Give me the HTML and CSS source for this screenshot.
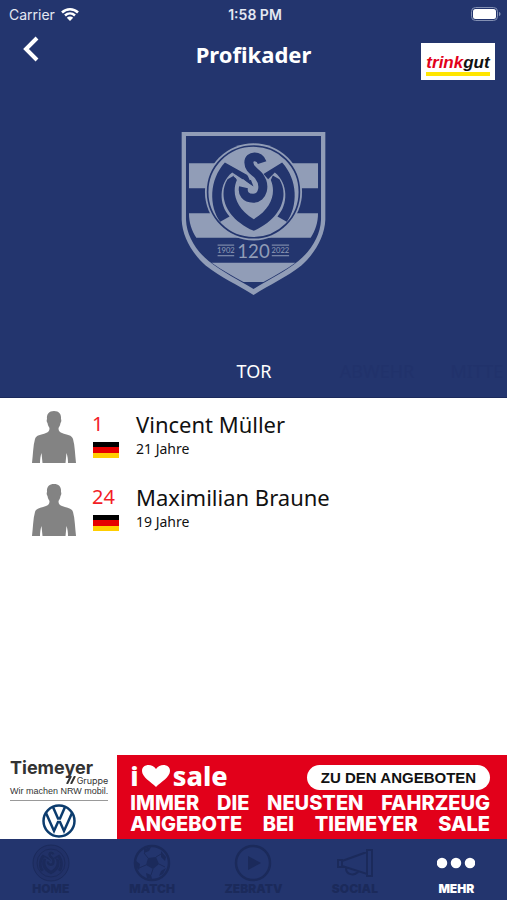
FILE: index.html
```html
<!DOCTYPE html>
<html lang="de">
<head>
    <meta charset="UTF-8">
    <meta name="viewport" content="width=device-width, initial-scale=1.0">
    <title>Profikader</title>
    <link rel="stylesheet" href="styles.css">
</head>
<body>

    <!-- shared shapes -->
    <svg class="defs" aria-hidden="true">
        <symbol id="msv" viewBox="18 12 290 290">
            <path d="M84 118 L104 107 L112 120 C97 155 105 203 163 238 C221 203 229 155 214 120 L220 107 L240 118 C269 165 248 235 163 273 C76 235 55 165 84 118Z"/>
            <path class="s-gap" d="M188 68 C180 44 148 46 148 68 C148 88 166 94 178 108 C200 136 190 175 161 175 C138 175 128 160 132 142"/>
            <path d="M76 68 L150 109 L162 140 L98 98 C57 130 57 195 90 230 L62 246 C28 200 28 120 76 68Z"/>
            <path d="M248 68 L192 102 L206 118 L226 98 C267 130 267 195 234 230 L262 246 C296 200 296 120 248 68Z"/>
            <path class="s-edge" d="M132 66 C134 88 146 98 154 120 M104 107 L160 146"/>
            <path class="s-line" d="M188 68 C180 44 148 46 148 68 C148 88 166 94 178 108 C200 136 190 175 161 175 C138 175 128 160 132 142"/>
            <path class="s-edge" d="M128 120 L158 144"/>
            <circle class="s-dot" cx="160" cy="150" r="9"/>
        </symbol>
        <symbol id="person" viewBox="0 0 44 52">
            <path d="M22 0C27 0 29.500 3 29 8C29.500 9 29.500 11 28.500 12C28 15 27 16 26.500 17C26.500 20 27.500 21 30 22C35 24 40 24 41 28C43 35 43 44 44 52H36C36 48 35.500 45 34.500 42L33.500 52H10.500L9.500 42C8.500 45 8 48 8 52H0C1 44 1 35 3 28C4 24 9 24 14 22C16.500 21 17.500 20 17.500 17C17 16 16 15 15.500 12C14.500 11 14.500 9 15 8C14.500 3 17 0 22 0Z"/>
        </symbol>
    </svg>

    <header class="header">
        <div class="status-bar">
            <div class="carrier">
                <span>Carrier</span>
                <svg class="wifi" viewBox="0 0 18 14">
                    <path d="M1 5.500C5.500 1 12.500 1 17 5.500M4 8.500C7 5.700 11 5.700 14 8.500"/>
                    <path class="wifi-dot" d="M9 14L5.800 10.700C7.500 9 10.500 9 12.200 10.700Z"/>
                </svg>
            </div>
            <span class="time">1:58 PM</span>
            <svg class="battery" viewBox="0 0 30 14">
                <rect class="battery-case" x="0.500" y="0.500" width="26" height="13" rx="4"/>
                <rect class="battery-fill" x="2" y="2" width="23" height="10" rx="2.500"/>
                <path class="battery-tip" d="M28 5C30 5.500 30 8.500 28 9Z"/>
            </svg>
        </div>

        <div class="title-bar">
            <button class="back-btn" aria-label="Zurück">
                <svg viewBox="0 0 16 26"><path d="M14 2L3 13L14 24"/></svg>
            </button>
            <h1>Profikader</h1>
            <a class="sponsor" href="#">
                <span class="sponsor-name"><span class="sponsor-red">trink</span>gut</span>
            </a>
        </div>

        <svg class="crest" viewBox="34 34 436 494">
            <path class="light" d="M36 36H468V300C466 350 438 400 396 437C350 473 300 495 252 526C204 495 154 473 108 437C66 400 38 350 36 300Z"/>
            <path class="dark" d="M49 48H455V300C453 346 428 390 387 424C345 458 298 480 252 508C206 480 159 458 117 424C76 390 51 346 49 300Z"/>
            <path class="light" d="M58 130H446V205H58ZM58 280H446C446 308 438 332 424 354H80C66 332 58 308 58 280ZM126 429H378C348 451 315 468 282 487H222C189 468 156 451 126 429Z"/>
            <circle class="light" cx="252" cy="216" r="146"/>
            <circle class="ring" cx="252" cy="216" r="138"/>
            <use href="#msv" x="108" y="72" width="290" height="290"/>
            <path class="date-lines" d="M144 376H194M144 408H194M307 376H359M307 408H359"/>
            <text class="date" x="169" y="400">1902</text>
            <text class="years" x="252" y="414">120</text>
            <text class="date" x="333" y="400">2022</text>
        </svg>

        <nav class="tabs">
            <button class="tab active">TOR</button>
            <button class="tab">ABWEHR</button>
            <button class="tab next">MITTE</button>
        </nav>
    </header>

    <main class="players">
        <div class="player">
            <svg class="photo"><use href="#person"/></svg>
            <div class="number">
                <span>1</span>
                <div class="flag"></div>
            </div>
            <div class="info">
                <h2>Vincent Müller</h2>
                <p>21 Jahre</p>
            </div>
        </div>
        <div class="player">
            <svg class="photo"><use href="#person"/></svg>
            <div class="number">
                <span>24</span>
                <div class="flag"></div>
            </div>
            <div class="info">
                <h2>Maximilian Braune</h2>
                <p>19 Jahre</p>
            </div>
        </div>
    </main>

    <!-- ad banner -->
    <section class="banner">
        <div class="dealer">
            <div class="dealer-name">Tiemeyer</div>
            <div class="dealer-group"><svg viewBox="0 0 12 8"><path d="M2 8L6 0M6 8L10 0"/></svg>Gruppe</div>
            <div class="dealer-claim">Wir machen NRW mobil.</div>
            <svg class="vw" viewBox="0 0 34 34">
                <circle cx="17" cy="17" r="15.500"/>
                <path d="M11 3L16 14.500H18L23 3M4 9L12 27L16 18H18L22 27L30 9"/>
            </svg>
        </div>
        <div class="sale">
            <div class="sale-top">
                <div class="sale-logo">
                    <span>i</span>
                    <svg viewBox="0 0 30 24"><path d="M15 23C10 18 1 13 1 7C1 0 11 -1 15 5C19 -1 29 0 29 7C29 13 20 18 15 23Z"/></svg>
                    <span>sale</span>
                </div>
                <button class="offer-btn">ZU DEN ANGEBOTEN</button>
            </div>
            <p>IMMER DIE NEUSTEN FAHRZEUG</p>
            <p>ANGEBOTE BEI TIEMEYER SALE</p>
        </div>
    </section>

    <nav class="bottom-nav">
        <a href="#">
            <svg class="home-icon" viewBox="0 0 38 38">
                <circle class="disc" cx="19" cy="19" r="18"/>
                <circle cx="19" cy="19" r="14"/>
                <use href="#msv" x="5" y="5" width="28" height="28"/>
            </svg>
            HOME
        </a>
        <a href="#">
            <svg viewBox="0 0 38 38">
                <circle cx="19" cy="19" r="17"/>
                <path class="solid" d="M15 14L23 13L26 20L20 25L13 21ZM11 5L18 3L16 7L11 9ZM28 7L33 13L32 17L28 13ZM3 17L7 20L6 26L3 23ZM13 29L18 31L19 35L14 34ZM28 27L33 24L30 30L26 32Z"/>
                <path class="seam" d="M15 14L11 9M23 13L28 10M26 20L32 23M20 25L18 31M13 21L6 24"/>
            </svg>
            MATCH
        </a>
        <a href="#">
            <svg viewBox="0 0 38 38">
                <circle cx="19" cy="19" r="17"/>
                <path class="solid" d="M14 12L27 19L14 26Z"/>
            </svg>
            ZEBRATV
        </a>
        <a href="#">
            <svg class="thin" viewBox="0 0 38 38">
                <path d="M6 17L31 8V30L6 22ZM2 16H6V23H2ZM31 6H36V32H31ZM10 24C10 31 18 32 22 28"/>
            </svg>
            SOCIAL
        </a>
        <a class="current" href="#">
            <svg viewBox="0 0 38 38">
                <circle cx="5" cy="19" r="4"/>
                <circle cx="19" cy="19" r="4"/>
                <circle cx="33" cy="19" r="4"/>
            </svg>
            MEHR
        </a>
    </nav>

</body>
</html>
```
FILE: styles.css
```css
* {
    box-sizing: border-box;
}

body {
    margin: 0;
    min-height: 100vh;
    display: flex;
    flex-direction: column;
    font-family: "Noto Sans", "Open Sans", sans-serif;
    background: white;
    color: #111;
}

h1, h2, p {
    margin: 0;
}

button {
    border: none;
    padding: 0;
    background: none;
    font-family: inherit;
    cursor: pointer;
}

a {
    text-decoration: none;
}

.defs {
    display: none;
}

/* header */
.header {
    background: #23356e;
    color: white;
    border-bottom: 1px solid #1b2a5c;
}

.status-bar {
    display: grid;
    grid-template-columns: 1fr auto 1fr;
    align-items: center;
    height: 28px;
    padding: 0 6px 0 9px;
    font-family: Inter, sans-serif;
    font-size: 14px;
    color: #e4e8f2;
}

.carrier {
    display: flex;
    align-items: center;
    gap: 6px;
}

.wifi {
    width: 18px;
    height: 14px;
    fill: none;
    stroke: white;
    stroke-width: 2.5;
}

.wifi-dot {
    fill: white;
    stroke: none;
}

.time {
    font-weight: 600;
}

.battery {
    width: 30px;
    height: 14px;
    justify-self: end;
}

.battery-case {
    fill: none;
    stroke: #8390b3;
}

.battery-fill {
    fill: white;
}

.battery-tip {
    fill: #8390b3;
}

.title-bar {
    display: grid;
    grid-template-columns: 1fr auto 1fr;
    align-items: start;
    height: 103px;
    padding: 8px 12px 0 12px;
}

.title-bar h1 {
    padding-top: 2px;
    font-size: 22px;
    line-height: 32px;
}

.back-btn {
    width: 16px;
    height: 26px;
    margin-left: 11px;
}

.back-btn svg {
    display: block;
    fill: none;
    stroke: white;
    stroke-width: 4;
}

.sponsor {
    justify-self: end;
    display: flex;
    justify-content: center;
    width: 74px;
    height: 37px;
    margin-top: 7px;
    padding-top: 11px;
    background: white;
    color: #111;
}

.sponsor-name {
    height: 22px;
    border-bottom: 4px solid #ffe500;
    font-family: "Liberation Sans", Arial, sans-serif;
    font-size: 17px;
    font-weight: bold;
    font-style: italic;
    line-height: 18px;
}

.sponsor-red {
    color: #e2001a;
}

.crest {
    display: block;
    width: 145px;
    height: 165px;
    margin: 0 auto;
    color: #23356e;
}

.light {
    fill: #919db7;
}

.dark {
    fill: #23356e;
}

.ring {
    fill: none;
    stroke: #23356e;
    stroke-width: 5;
}

#msv {
    fill: currentColor;
}

.s-gap, .s-line, .s-edge {
    fill: none;
    stroke: var(--gap, #919db7);
    stroke-width: 40;
}

.s-line {
    stroke: currentColor;
    stroke-width: 27;
}

.s-edge {
    stroke-width: 7;
}

.s-dot {
    fill: var(--gap, #919db7);
    stroke: none;
}

.date-lines {
    stroke: #919db7;
    stroke-width: 3;
}

.date, .years {
    fill: #919db7;
    font-family: Lato, sans-serif;
    font-size: 23px;
    text-anchor: middle;
}

.years {
    font-size: 56px;
}

.tabs {
    display: flex;
    height: 101px;
    padding-top: 49px;
    padding-left: calc(50% - 61px);
}

.tab {
    flex: 0 0 123px;
    height: 52px;
    font-size: 18px;
    color: #21326b;
}

.tab.active {
    color: white;
}

.tab.next {
    flex: 0 0 auto;
    margin-left: 12px;
}

/* player list */
.players {
    flex: 1;
    padding-top: 13px;
}

.player {
    display: flex;
    height: 73px;
    padding-left: 32px;
}

.photo {
    width: 44px;
    height: 52px;
    margin-right: 16px;
    fill: #838383;
}

.number {
    width: 44px;
    font-size: 20px;
    line-height: 26px;
    color: #f21d26;
}

.flag {
    width: 26px;
    height: 16px;
    margin: 5px 0 0 1px;
    background: linear-gradient(black 34%, #e60000 34%, #e60000 67%, #ffce00 67%);
}

.info h2 {
    font-size: 22px;
    font-weight: normal;
    line-height: 26px;
}

.info p {
    font-size: 14px;
    line-height: 24px;
}

/* banner */
.banner {
    display: flex;
    height: 84px;
}

.dealer {
    flex: 0 0 117px;
    display: flex;
    flex-direction: column;
    padding: 5px 9px 0 10px;
    color: #333;
}

.dealer-name {
    font-family: Inter, sans-serif;
    font-size: 18px;
    font-weight: 700;
    line-height: 16px;
}

.dealer-group {
    display: flex;
    justify-content: flex-end;
    font-family: Inter, sans-serif;
    font-size: 9px;
    line-height: 9px;
}

.dealer-group svg {
    width: 12px;
    height: 8px;
    stroke: #333;
    stroke-width: 2;
}

.dealer-claim {
    padding-bottom: 2px;
    border-bottom: 1px solid #999;
    font-family: "Liberation Sans", Arial, sans-serif;
    font-size: 9px;
    line-height: 13px;
    white-space: nowrap;
}

.vw {
    width: 34px;
    height: 34px;
    margin: 3px auto 0;
    fill: none;
    stroke: #0c3c6e;
    stroke-width: 2.5;
}

.sale {
    flex: 1;
    padding: 8px 17px 0 13px;
    background: #e2001a;
    color: white;
    font-family: Inter, sans-serif;
}

.sale-top {
    display: flex;
    justify-content: space-between;
    height: 30px;
}

.sale-logo {
    display: flex;
    align-items: center;
    gap: 2px;
    height: 26px;
    font-family: "Noto Sans", sans-serif;
    font-size: 27px;
    font-weight: 800;
    line-height: 26px;
}

.sale-logo svg {
    width: 30px;
    height: 24px;
    fill: white;
}

.offer-btn {
    width: 183px;
    height: 25px;
    margin-top: 2px;
    border-radius: 13px;
    background: white;
    color: #111;
    font-family: "Liberation Sans", Arial, sans-serif;
    font-size: 15px;
    font-weight: bold;
    white-space: nowrap;
}

.sale p {
    font-size: 20px;
    font-weight: 800;
    line-height: 21px;
    white-space: nowrap;
    text-align-last: justify;
}

/* bottom navigation */
.bottom-nav {
    display: grid;
    grid-template-columns: repeat(5, 1fr);
    height: 61px;
    background: #23356e;
}

.bottom-nav a {
    display: flex;
    flex-direction: column;
    align-items: center;
    padding-top: 5px;
    font-family: Inter, sans-serif;
    font-size: 12px;
    font-weight: 900;
    line-height: 14px;
    color: #1b2a5b;
}

.bottom-nav svg {
    width: 38px;
    height: 38px;
    fill: none;
    stroke: currentColor;
    stroke-width: 2.5;
}

.bottom-nav .solid {
    fill: currentColor;
    stroke: none;
}

.bottom-nav .seam {
    stroke-width: 1;
}

.bottom-nav .thin {
    stroke-width: 2;
}

.bottom-nav .home-icon {
    --gap: #233569;
    stroke-width: 1;
}

.home-icon .disc {
    fill: #213168;
}

.home-icon use {
    stroke: none;
}

.bottom-nav .current {
    color: white;
}

.current circle {
    fill: white;
}
```
